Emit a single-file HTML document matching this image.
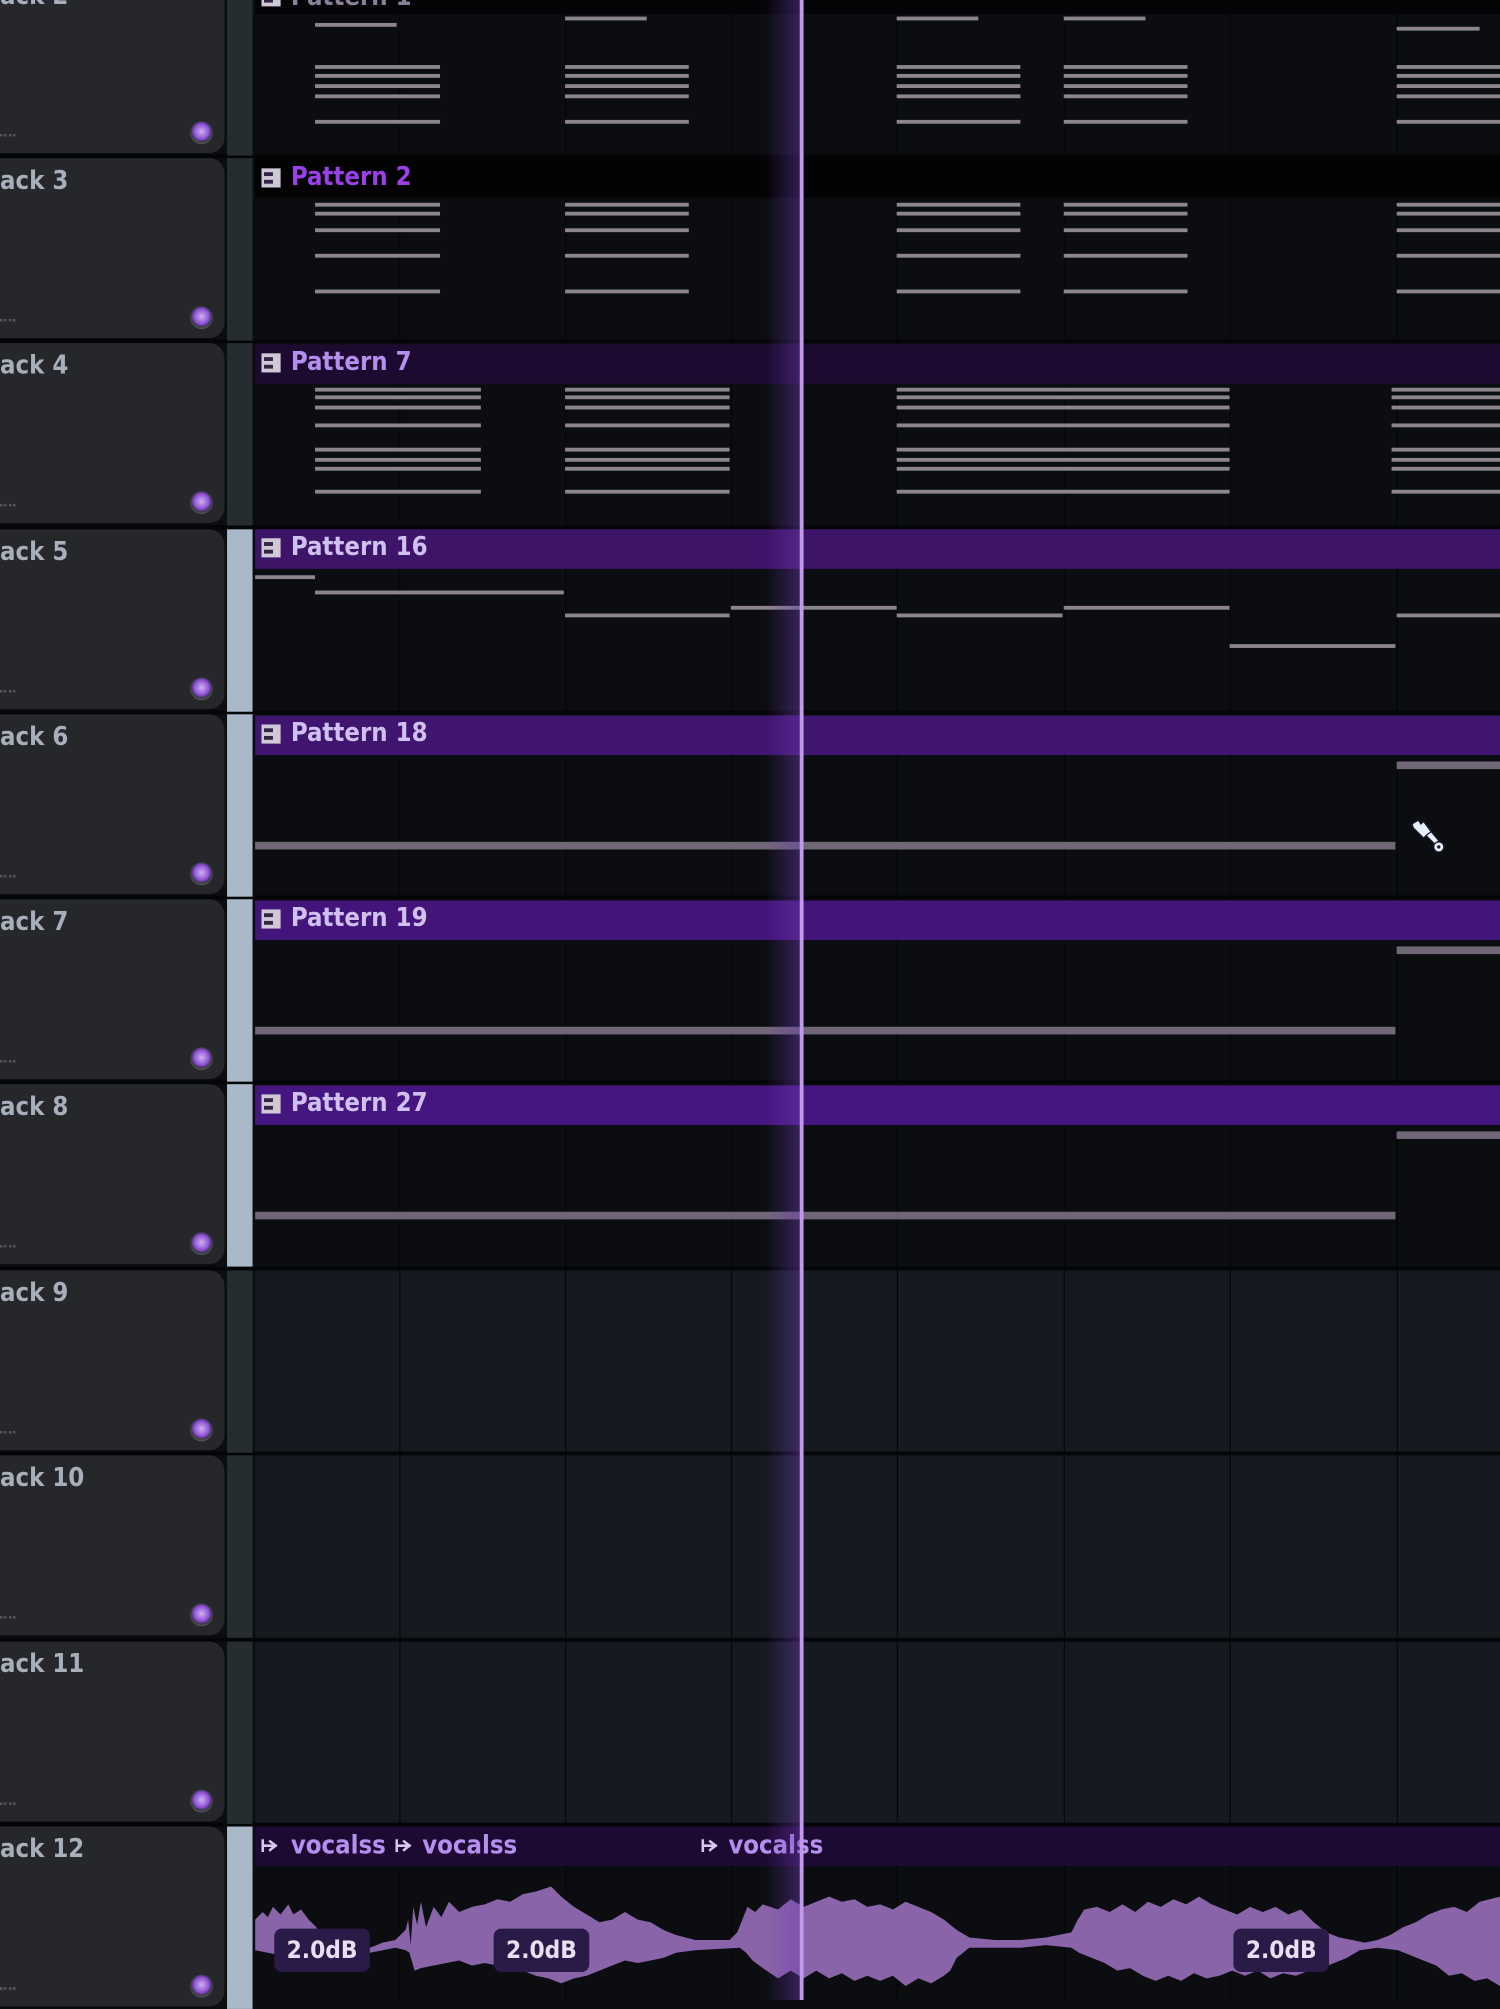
<!DOCTYPE html>
<html><head><meta charset="utf-8">
<style>
html,body{margin:0;padding:0;background:#0b0d10;overflow:hidden;width:1500px;height:2000px}
#w{position:absolute;left:0;top:0;width:1176px;height:1568px;transform:scale(1.27551);transform-origin:0 0;font-family:"Liberation Sans","DejaVu Sans",sans-serif}
.a{position:absolute}
.lp{position:absolute;left:-20px;width:196px;background:#25272b;border-radius:0 12px 12px 0;}
.nm{position:absolute;left:0;color:#a7b0ba;font-size:20px;font-weight:bold;font-family:"DejaVu Sans Condensed","Liberation Sans Narrow","Liberation Sans",sans-serif}
.dt{position:absolute;left:149px;width:18px;height:18px;border-radius:50%;background:radial-gradient(circle at 50% 45%,#d4b0f4 0,#8a4fd0 45%,#6a3aa8 52%,#3a3a40 60%,#5a5a62 75%,#2a2a2e 100%)}
.st{position:absolute;left:178px;width:20px}
.hd{position:absolute;left:200px;width:976px;height:31px}
.ht{position:absolute;left:228px;font-size:20px;font-weight:bold;color:#b48ff0;font-family:"DejaVu Sans Condensed","Liberation Sans",sans-serif}
.ic{position:absolute;left:205px;width:15px;height:15px;background:#cfc8d6}
.ic:before,.ic:after{content:"";position:absolute;left:2px;width:7px;height:3px;background:#332244}
.ic:before{top:3px}.ic:after{top:9px}
.n{position:absolute;height:3px;background:#8c8590}
.gl{position:absolute;width:1px;top:0;height:1568px;background:#05070a}
.db{position:absolute;top:1512px;width:75px;height:34px;border-radius:6px;background:#2a1a48;color:#e8e0f0;font-size:19px;font-weight:bold;text-align:center;line-height:34px;font-family:"DejaVu Sans Condensed","Liberation Sans",sans-serif}
.vt{position:absolute;top:1434px;font-size:20px;font-weight:bold;color:#b48ff0;font-family:"DejaVu Sans Condensed","Liberation Sans",sans-serif}
.ar{position:absolute;top:1440px;width:14px;height:14px}
</style></head><body><div id="w">
<div class="a" style="left:200px;top:0;width:976px;height:1568px;background:#0b0d11"></div>
<div class="a" style="left:200px;top:995px;width:976px;height:435px;background:#151a20"></div>
<div id="g"></div>
<div id="rows"></div>
<div class="hd" style="top:-20px;background:#050507"></div>
<div class="hd" style="top:124px;background:#030304"></div>
<div class="hd" style="top:270px;background:#1c0a30"></div>
<div class="hd" style="top:415px;background:#3d1468"></div>
<div class="hd" style="top:561px;background:#3f1570"></div>
<div class="hd" style="top:706px;background:#43157a"></div>
<div class="hd" style="top:851px;background:#461680"></div>
<div class="hd" style="top:1432px;background:#1d0a33"></div>
<div class="ic" style="top:-10px"></div><div class="ht" style="top:-15px;color:#8a8098">Pattern 1</div>
<div class="ic" style="top:132px"></div><div class="ht" style="top:126px;color:#9b3fe8">Pattern 2</div>
<div class="ic" style="top:277px"></div><div class="ht" style="top:271px">Pattern 7</div>
<div class="ic" style="top:422px"></div><div class="ht" style="top:416px;color:#d0c0f0">Pattern 16</div>
<div class="ic" style="top:568px"></div><div class="ht" style="top:562px;color:#d0c0f0">Pattern 18</div>
<div class="ic" style="top:713px"></div><div class="ht" style="top:707px;color:#d0c0f0">Pattern 19</div>
<div class="ic" style="top:858px"></div><div class="ht" style="top:852px;color:#d0c0f0">Pattern 27</div>
<div id="notes"></div>
<svg class="a" style="left:200px;top:1465px" width="976" height="103" viewBox="0 0 976 103">
<path fill="#8a64a8" d="M0,40 L6,34 10,38 14,30 20,36 26,28 30,36 36,32 42,40 48,46 54,56 60,62 70,66 80,64 90,62 100,58 110,56 118,48 120,40 122,60 124,30 127,44 130,26 134,46 140,30 146,38 152,26 160,34 170,30 180,28 190,24 200,26 210,20 220,18 232,14 240,22 250,30 260,36 270,42 280,40 290,34 300,40 310,42 320,48 330,52 345,56 372,56 378,50 382,40 386,30 392,34 398,28 410,32 420,24 430,30 440,26 450,22 460,26 470,24 480,30 490,28 500,32 510,26 520,30 530,34 540,40 550,48 560,54 580,56 600,56 620,54 640,50 645,40 650,32 660,30 670,34 680,28 690,34 700,26 710,30 720,24 730,28 740,22 750,28 760,32 770,36 780,30 790,34 800,30 810,36 820,32 830,42 840,50 850,54 860,56 870,58 880,56 890,52 900,46 910,42 920,36 930,32 940,30 950,34 960,26 976,22 L976,92 966,86 956,88 946,82 936,84 926,76 916,72 906,68 896,64 880,62 866,64 856,70 846,74 836,78 826,80 816,84 806,82 796,86 786,80 776,84 766,80 756,84 746,86 736,82 726,88 716,84 706,88 696,84 686,78 676,80 666,74 656,70 646,66 640,62 620,60 600,62 580,62 560,62 550,70 545,80 540,84 530,90 520,86 510,92 500,84 490,88 480,84 470,88 460,82 450,86 440,80 430,86 420,80 410,86 398,78 390,72 385,66 380,62 345,64 330,66 320,70 310,72 300,74 290,72 280,76 270,80 260,84 250,86 240,90 230,86 220,84 210,80 200,78 190,76 180,74 170,76 160,72 150,74 140,76 130,78 125,80 121,66 118,64 110,62 100,64 90,66 80,68 70,70 60,74 50,76 40,72 30,70 20,68 10,66 0,64 Z"/>
</svg>
<div class="db" style="left:215px">2.0dB</div>
<div class="db" style="left:387px">2.0dB</div>
<div class="db" style="left:967px">2.0dB</div>
<svg class="ar" style="left:205px" viewBox="0 0 14 14"><path d="M1,2 V12 M1,7 H12 M6,3 L11,7 L6,11" stroke="#d8c8ee" stroke-width="2" fill="none"/></svg>
<svg class="ar" style="left:310px" viewBox="0 0 14 14"><path d="M1,2 V12 M1,7 H12 M6,3 L11,7 L6,11" stroke="#d8c8ee" stroke-width="2" fill="none"/></svg>
<svg class="ar" style="left:550px" viewBox="0 0 14 14"><path d="M1,2 V12 M1,7 H12 M6,3 L11,7 L6,11" stroke="#d8c8ee" stroke-width="2" fill="none"/></svg>
<div class="vt" style="left:228px">vocalss</div>
<div class="vt" style="left:331px">vocalss</div>
<div class="vt" style="left:571px">vocalss</div>
<div class="a" style="left:600px;top:0;width:28px;height:1568px;background:linear-gradient(90deg,rgba(110,60,180,0),rgba(110,60,180,0.45))"></div>
<div class="a" style="left:627px;top:0;width:3px;height:1568px;background:#c09ae8"></div>
<svg class="a" style="left:1104px;top:640px" width="34" height="34" viewBox="0 0 34 34">
<path d="M3,6 L8,3 L10,6 L12,4 L18,12 L12,17 L4,9 Z" fill="#e8f0ff" stroke="#1a1a2a" stroke-width="1"/>
<path d="M14,15 L18,12 L24,19 L21,22 Z" fill="#e8f0ff" stroke="#1a1a2a" stroke-width="1"/>
<circle cx="24" cy="24" r="4" fill="#e8f0ff" stroke="#1a1a2a"/><circle cx="24" cy="24" r="1.3" fill="#1a1a2a"/>
</svg>
</div>
<script>
var W=document.getElementById('w');
function d(c,s,p){var e=document.createElement('div');e.className=c;e.style.cssText=s;(p||W).appendChild(e);return e;}
var G=document.getElementById('g'),RW=document.getElementById('rows'),NT=document.getElementById('notes');
[313,443,573,703,834,964,1095].forEach(function(x){d('gl','left:'+x+'px',G);});
var tops=[-23,122,267,413,558,703,848,994,1139,1285,1430];
var names=['ack 2','ack 3','ack 4','ack 5','ack 6','ack 7','ack 8','ack 9','ack 10','ack 11','ack 12'];
var light=[0,0,0,1,1,1,1,0,0,0,1];
tops.forEach(function(t,i){
 d('a','left:0;top:'+(t-1)+'px;width:1176px;height:3px;background:#040506',RW);
 d('lp','top:'+(t+2)+'px;height:141px');
 var n=d('nm','top:'+(t+7)+'px');n.textContent=names[i];
 d('dt','top:'+(t+118)+'px');
 d('a','left:0;top:'+(t+128)+'px;width:12px;height:2px;border-top:2px dotted #555');
 d('st','top:'+(t+2)+'px;height:143px;background:'+(light[i]?'#a9b9c9':'#262d31'));
});
function N(x1,x2,y){d('n','left:'+x1+'px;width:'+(x2-x1)+'px;top:'+(y-1)+'px',NT);}
var R2=[[247,345],[443,540],[703,800],[834,931],[1095,1176]];
[52,59,67,75,95].forEach(function(y){R2.forEach(function(r){N(r[0],r[1],y);});});
N(247,311,19);N(443,507,14);N(703,767,14);N(834,898,14);N(1095,1160,22);
[160,167,180,200,228].forEach(function(y){R2.forEach(function(r){N(r[0],r[1],y);});});
var R4=[[247,377],[443,572],[703,964],[1091,1176]];
[305,311,319,333,352,360,367,385].forEach(function(y){R4.forEach(function(r){N(r[0],r[1],y);});});
N(200,247,452);N(247,442,464);N(443,572,482);N(573,703,476);N(703,833,482);N(834,964,476);N(964,1094,506);N(1095,1176,482);
[[662,599],[807,744],[952,889]].forEach(function(p){d('n','left:200px;width:894px;top:'+(p[0]-2)+'px;height:6px;background:#6f6676',NT);d('n','left:1095px;width:81px;top:'+(p[1]-2)+'px;height:6px;background:#6f6676',NT);});
</script>
</body></html>
